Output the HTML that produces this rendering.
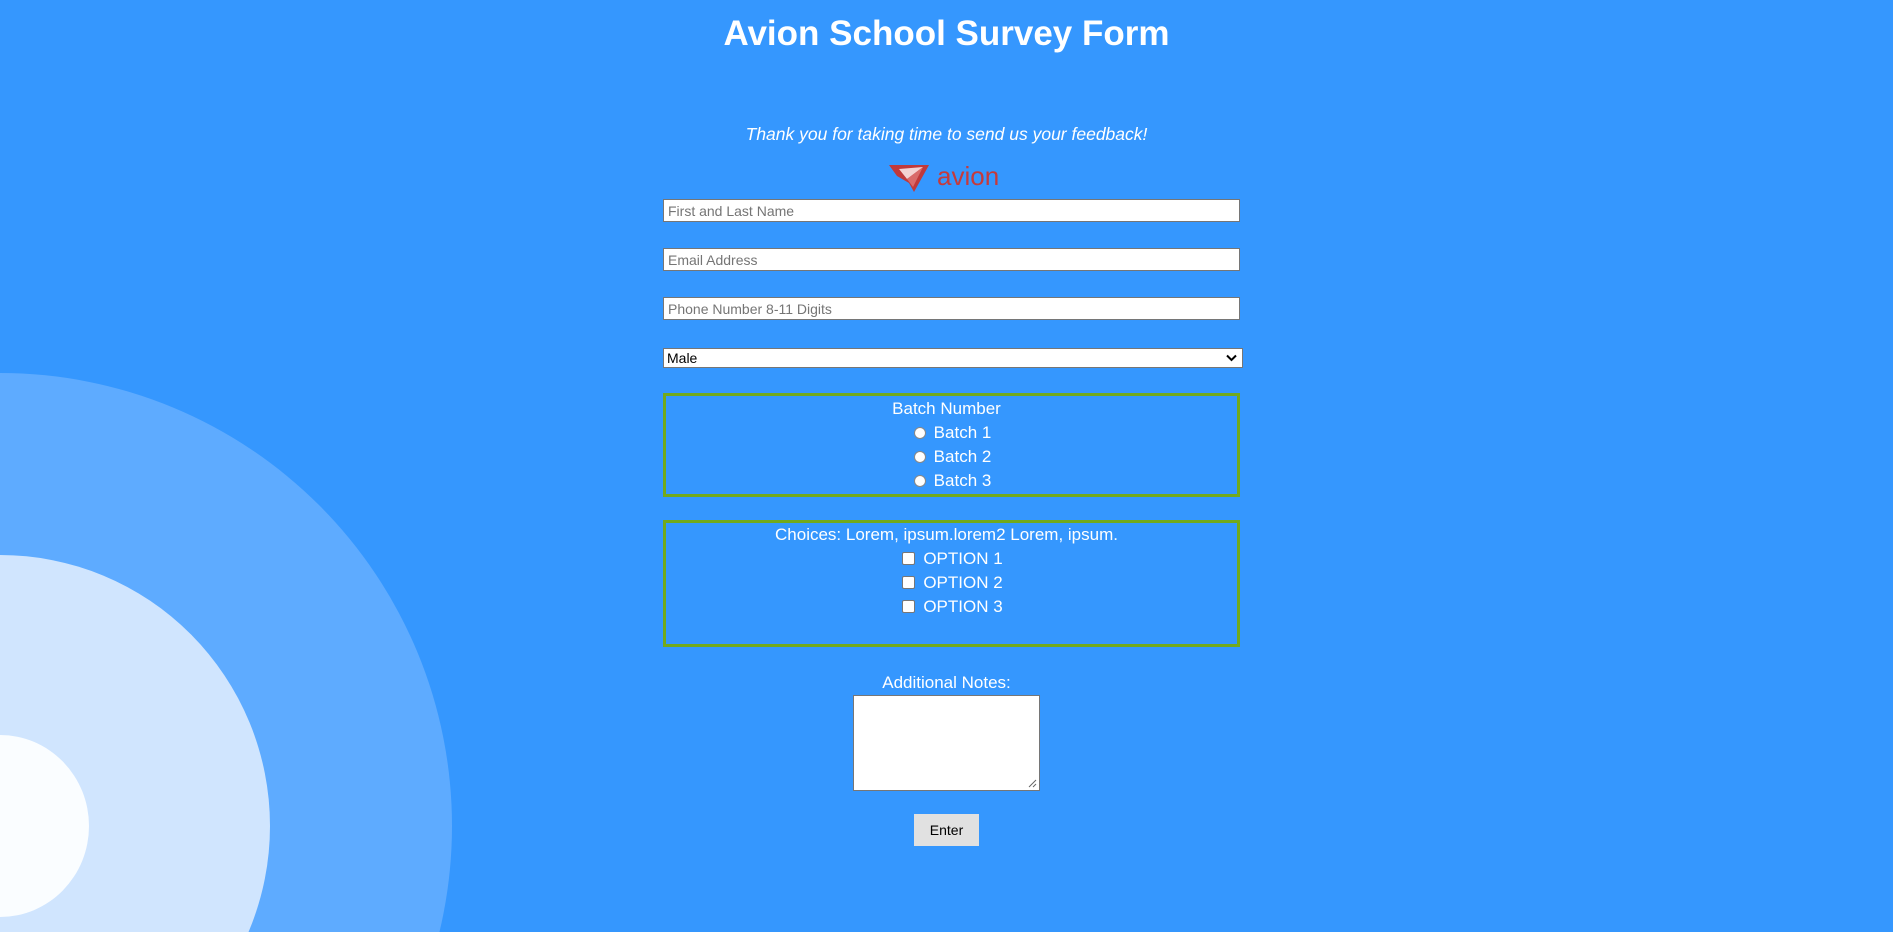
<!DOCTYPE html>
<html><head><meta charset="utf-8"><style>
html,body{margin:0;padding:0;width:1893px;height:932px;overflow:hidden;background:#3597fe;font-family:"Liberation Sans",sans-serif;}
#w{position:relative;width:1893px;height:932px;overflow:hidden;}
.abs{position:absolute;}
.e{position:absolute;border-radius:50%;}
.t{color:#fff;text-align:center;left:0;width:1893px;}
input.txt{position:absolute;left:663px;width:577px;height:23px;box-sizing:border-box;border:1px solid #767676;background:#fff;padding:1px 4px;font:14px "Liberation Sans",sans-serif;color:#757575;margin:0;}
.fs{position:absolute;left:663px;width:577px;box-sizing:border-box;border:3px solid #72a91c;}
.lbl{color:#fff;font-size:17px;position:absolute;left:0;width:1893px;text-align:center;line-height:24px;}
.rad{display:inline-block;width:12px;height:12px;border-radius:50%;background:#fff;border:1px solid #888;box-sizing:border-box;vertical-align:-1px;margin-right:8px;}
.chk{display:inline-block;width:13px;height:13px;border-radius:2px;background:#fff;border:1px solid #777;box-sizing:border-box;vertical-align:-1px;margin-right:8px;}
</style></head><body><div id="w">
<div class="e" style="left:-452px;top:373px;width:904px;height:906px;background:#5eabff"></div>
<div class="e" style="left:-270px;top:555px;width:540px;height:542px;background:#d0e5fe"></div>
<div class="e" style="left:-89px;top:735px;width:178px;height:182px;background:#fafdff"></div>

<div class="abs t" style="top:10px;font-size:35px;font-weight:bold;line-height:48px;">Avion School Survey Form</div>
<div class="abs t" style="top:122px;font-size:17.5px;font-style:italic;line-height:24px;">Thank you for taking time to send us your feedback!</div>

<svg class="abs" style="left:889px;top:163px" width="42" height="30" viewBox="0 0 42 30">
<polygon points="0,2 40,2 25,29 20,20 8,13" fill="#c0393b"/>
<polygon points="10,6 34,4 18,16" fill="#f4d2d2"/>
<polygon points="18,16 34,4 24,24" fill="#d96a6a"/>
</svg>
<div class="abs" style="left:937px;top:160px;font-size:26px;color:#c63a3a;line-height:32px;">avion</div>

<input class="txt" style="top:199px" placeholder="First and Last Name">
<input class="txt" style="top:248px" placeholder="Email Address">
<input class="txt" style="top:297px" placeholder="Phone Number 8-11 Digits">
<div class="abs" style="left:663px;top:348px;width:580px;height:20px;box-sizing:border-box;border:1px solid #767676;background:#fff;font-size:14px;line-height:18px;padding-left:3px;color:#000;">Male
<svg style="position:absolute;right:5px;top:5px" width="11" height="8" viewBox="0 0 11 8"><path d="M1 1.5 L5.5 6 L10 1.5" stroke="#000" stroke-width="2" fill="none"/></svg></div>

<div class="fs" style="top:393px;height:104px"></div>
<div class="lbl" style="top:397px">Batch Number</div>
<div class="lbl" style="top:421px;left:6px"><span class="rad"></span>Batch 1</div>
<div class="lbl" style="top:445px;left:6px"><span class="rad"></span>Batch 2</div>
<div class="lbl" style="top:469px;left:6px"><span class="rad"></span>Batch 3</div>

<div class="fs" style="top:520px;height:127px"></div>
<div class="lbl" style="top:523px">Choices: Lorem, ipsum.lorem2 Lorem, ipsum.</div>
<div class="lbl" style="top:547px;left:6px"><span class="chk"></span>OPTION 1</div>
<div class="lbl" style="top:571px;left:6px"><span class="chk"></span>OPTION 2</div>
<div class="lbl" style="top:595px;left:6px"><span class="chk"></span>OPTION 3</div>

<div class="lbl" style="top:671px">Additional Notes:</div>
<div class="abs" style="left:853px;top:695px;width:187px;height:96px;box-sizing:border-box;border:1px solid #767676;background:#fff;">
<svg style="position:absolute;right:2px;bottom:2px" width="10" height="10" viewBox="0 0 10 10"><path d="M9 2 L2 9 M9 6 L6 9" stroke="#666" stroke-width="1" fill="none"/></svg></div>
<div class="abs" style="left:914px;top:814px;width:65px;height:32px;background:#e1e1e1;font-size:14px;line-height:32px;text-align:center;color:#000;">Enter</div>
</div></body></html>
